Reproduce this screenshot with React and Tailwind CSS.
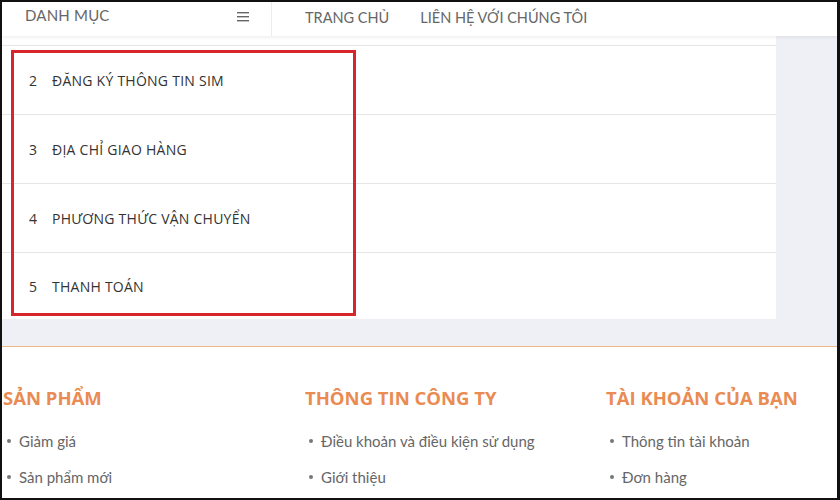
import React from "react";

const steps = [
  { n: 2, label: "ĐĂNG KÝ THÔNG TIN SIM" },
  { n: 3, label: "ĐỊA CHỈ GIAO HÀNG" },
  { n: 4, label: "PHƯƠNG THỨC VẬN CHUYỂN" },
  { n: 5, label: "THANH TOÁN" },
];

const footerCols = [
  { title: "SẢN PHẨM", items: ["Giảm giá", "Sản phẩm mới"] },
  { title: "THÔNG TIN CÔNG TY", items: ["Điều khoản và điều kiện sử dụng", "Giới thiệu"] },
  { title: "TÀI KHOẢN CỦA BẠN", items: ["Thông tin tài khoản", "Đơn hàng"] },
];

export default function App() {
  return (
    <div className="w-[840px] h-[500px] bg-[#111] pt-[2px] pl-[2px] pr-[3px] pb-[2px]">
      <div
        className="w-full h-full bg-white overflow-hidden flex flex-col"
        style={{ fontFamily: "'Open Sans', 'Noto Sans', sans-serif" }}
      >
        {/* Top nav */}
        <div className="h-[34px] shrink-0 flex bg-white shadow-[0_2px_3px_rgba(0,0,0,0.06)] relative z-10">
          <div
            className="w-[270px] flex items-start justify-between pl-[23px] pr-[20px] pt-[2px] border-r border-[#ececec]"
            style={{ fontFamily: "Lato, sans-serif" }}
          >
            <span className="text-[15px] text-[#666] tracking-[0.2px]">DANH MỤC</span>
            <svg width="12" height="10" viewBox="0 0 12 10" className="mt-[8px] mr-[2px]">
              <rect x="0" y="0" width="12" height="1.4" fill="#666" />
              <rect x="0" y="4" width="12" height="1.4" fill="#666" />
              <rect x="0" y="8" width="12" height="1.4" fill="#666" />
            </svg>
          </div>
          <div
            className="flex items-center gap-[31px] pl-[33px] pb-[3px] text-[14.5px] text-[#666]"
            style={{ fontFamily: "Lato, sans-serif" }}
          >
            <span>TRANG CHỦ</span>
            <span>LIÊN HỆ VỚI CHÚNG TÔI</span>
          </div>
        </div>

        {/* Main */}
        <div className="h-[310px] shrink-0 bg-[#eef0f5] flex items-start relative">
          <div className="w-[774px] bg-white pt-[9px]">
            {steps.map((s, i) => (
              <div
                key={s.n}
                className={`flex items-center border-t border-[#e6e6e6] text-[14px] text-[#333] tracking-[0.25px] ${
                  i === steps.length - 1 ? "h-[67px]" : "h-[69px]"
                }`}
              >
                <span className="w-[50px] pl-[27px]">{s.n}</span>
                <span>{s.label}</span>
              </div>
            ))}
          </div>
          <div className="absolute left-[9px] top-[14px] w-[345px] h-[266px] border-[3px] border-[#d7262b]" />
        </div>

        {/* Footer */}
        <div className="flex-1 border-t border-[#f1b888] bg-white grid grid-cols-[302px_301px_1fr] pl-[1px] pt-[39px]">
          {footerCols.map((c) => (
            <div key={c.title}>
              <h3 className="text-[18.5px] font-bold text-[#e98b52] leading-[24px]">{c.title}</h3>
              <ul className="mt-[20px] flex flex-col gap-[14px]" style={{ fontFamily: "Lato, sans-serif" }}>
                {c.items.map((it) => (
                  <li key={it} className="flex items-center text-[15px] text-[#666] leading-[22px]">
                    <span className="w-[16px] pl-[4px] flex">
                      <span className="w-[4px] h-[4px] rounded-full bg-[#777]" />
                    </span>
                    <span>{it}</span>
                  </li>
                ))}
              </ul>
            </div>
          ))}
        </div>
      </div>
    </div>
  );
}
